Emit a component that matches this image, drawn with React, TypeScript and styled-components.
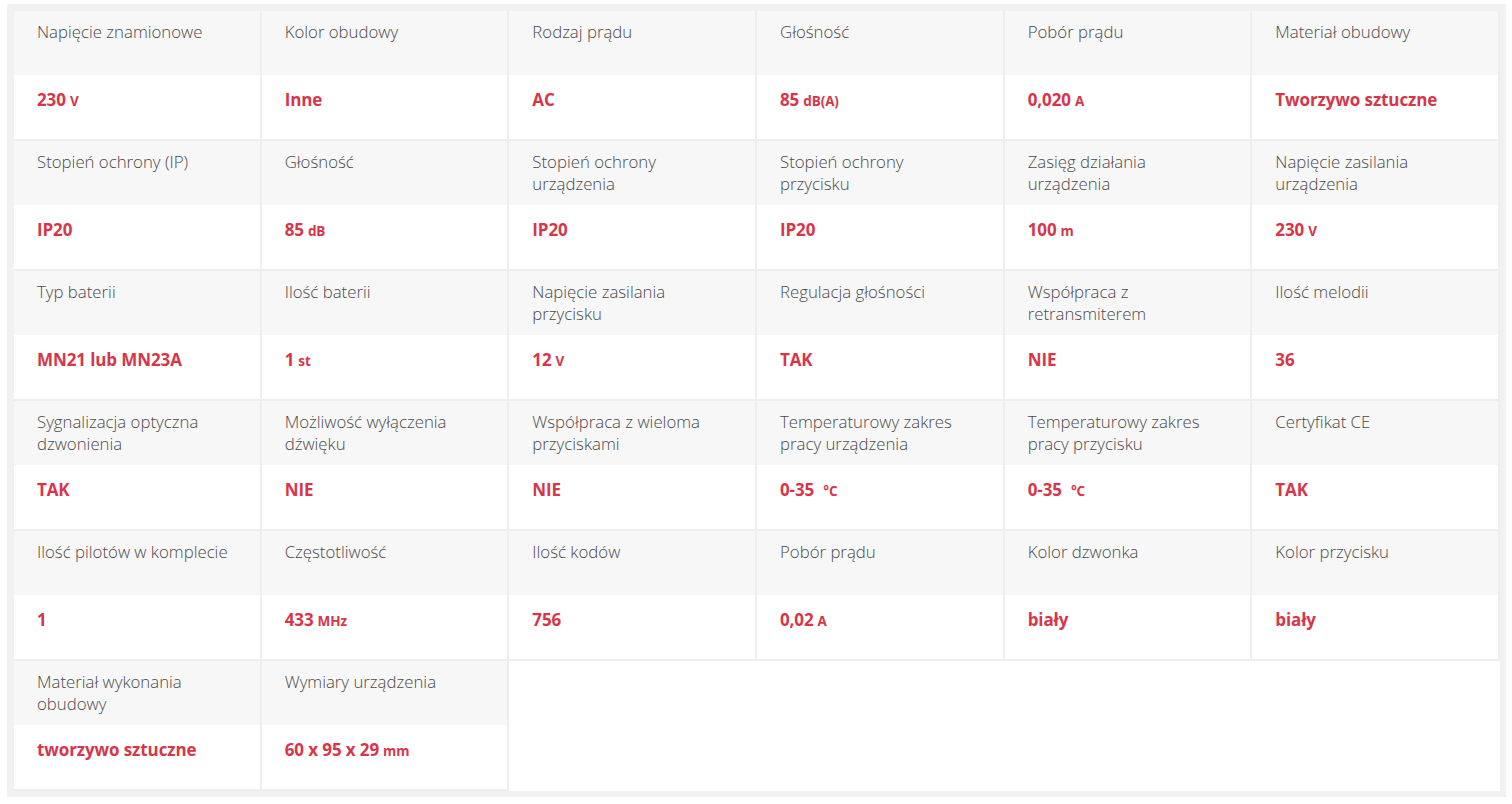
import React from "react";
import styled, { createGlobalStyle } from "styled-components";

const Global = createGlobalStyle`
  html, body { margin: 0; padding: 0; background: #ffffff; }
  body { font-family: "Open Sans", "Liberation Sans", sans-serif; }
`;

const Frame = styled.div`
  margin: 4px 6px 0 7px;
  padding: 7px 6px 6px 7px;
  background: #f1f1f1;
`;

const Table = styled.div`
  display: grid;
  grid-template-columns: repeat(6, 1fr);
  background: #ffffff;
`;

const Cell = styled.div`
  display: flex;
  flex-direction: column;
  border-right: 2px solid #eeeeee;
  border-bottom: 2px solid #eeeeee;
  min-width: 0;
`;

const Label = styled.div`
  height: 64px;
  box-sizing: border-box;
  padding: 10px 28px 0 23px;
  background: #f7f7f7;
  color: #4a4a4a;
  font-size: 16.8px;
  line-height: 22px;
  font-weight: 300;
`;

const Value = styled.div`
  height: 64px;
  box-sizing: border-box;
  padding: 14px 14px 0 23px;
  background: #ffffff;
  color: #d7364a;
  font-size: 17px;
  line-height: 22px;
  font-weight: 700;
  letter-spacing: -0.1px;
`;

const Unit = styled.span<{ $gap?: boolean }>`
  font-size: 13.5px;
  margin-left: ${(p) => (p.$gap ? "9px" : "4px")};
`;

type Item = { label: string; value: string; unit?: string; gap?: boolean };

const items: Item[] = [
  { label: "Napięcie znamionowe", value: "230", unit: "V" },
  { label: "Kolor obudowy", value: "Inne" },
  { label: "Rodzaj prądu", value: "AC" },
  { label: "Głośność", value: "85", unit: "dB(A)" },
  { label: "Pobór prądu", value: "0,020", unit: "A" },
  { label: "Materiał obudowy", value: "Tworzywo sztuczne" },
  { label: "Stopień ochrony (IP)", value: "IP20" },
  { label: "Głośność", value: "85", unit: "dB" },
  { label: "Stopień ochrony urządzenia", value: "IP20" },
  { label: "Stopień ochrony przycisku", value: "IP20" },
  { label: "Zasięg działania urządzenia", value: "100", unit: "m" },
  { label: "Napięcie zasilania urządzenia", value: "230", unit: "V" },
  { label: "Typ baterii", value: "MN21 lub MN23A" },
  { label: "Ilość baterii", value: "1", unit: "st" },
  { label: "Napięcie zasilania przycisku", value: "12", unit: "V" },
  { label: "Regulacja głośności", value: "TAK" },
  { label: "Współpraca z retransmiterem", value: "NIE" },
  { label: "Ilość melodii", value: "36" },
  { label: "Sygnalizacja optyczna dzwonienia", value: "TAK" },
  { label: "Możliwość wyłączenia dźwięku", value: "NIE" },
  { label: "Współpraca z wieloma przyciskami", value: "NIE" },
  { label: "Temperaturowy zakres pracy urządzenia", value: "0-35", unit: "°C", gap: true },
  { label: "Temperaturowy zakres pracy przycisku", value: "0-35", unit: "°C", gap: true },
  { label: "Certyfikat CE", value: "TAK" },
  { label: "Ilość pilotów w komplecie", value: "1" },
  { label: "Częstotliwość", value: "433", unit: "MHz" },
  { label: "Ilość kodów", value: "756" },
  { label: "Pobór prądu", value: "0,02", unit: "A" },
  { label: "Kolor dzwonka", value: "biały" },
  { label: "Kolor przycisku", value: "biały" },
  { label: "Materiał wykonania obudowy", value: "tworzywo sztuczne" },
  { label: "Wymiary urządzenia", value: "60 x 95 x 29", unit: "mm" },
];

export default function App() {
  return (
    <>
      <Global />
      <Frame>
        <Table>
          {items.map((it, i) => (
            <Cell key={i}>
              <Label>{it.label}</Label>
              <Value>
                {it.value}
                {it.unit && <Unit $gap={it.gap}>{it.unit}</Unit>}
              </Value>
            </Cell>
          ))}
        </Table>
      </Frame>
    </>
  );
}
